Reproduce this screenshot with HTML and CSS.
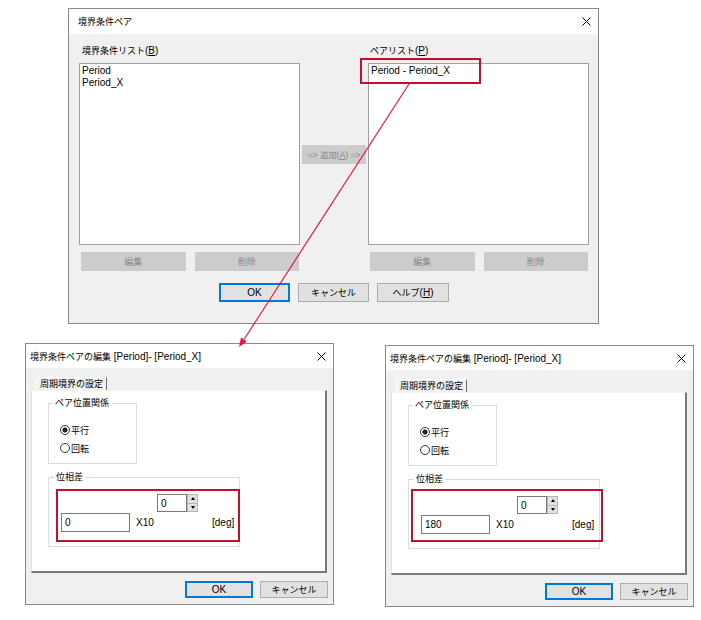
FILE: index.html
```html
<!DOCTYPE html>
<html>
  <head>
    <title>境界条件ペア</title>
    <meta charset="utf-8" />
    <link rel="stylesheet" href="styles.css">
  </head>
  <body>
    <div class="canvas">
      <div class="win win-main">
        <div class="titlebar">
          <span class="ja">境界条件ペア</span>
          <svg class="close" width="9" height="9" viewBox="0 0 9 9"><path d="M0.5 0.5L8.5 8.5M8.5 0.5L0.5 8.5" /></svg>
        </div>
        <div class="main-body">
          <div class="pairs">
            <div class="lbl"><span class="ja">境界条件リスト</span>(<u>B</u>)</div>
            <div class="lbl lbl-right"><span class="ja">ペアリスト</span>(<u>P</u>)</div>
            <div class="listbox">
              <div>Period</div>
              <div>Period_X</div>
            </div>
            <button class="btn off add"><span>=&gt; <span class="ja">追加</span>(<u>A</u>) =&gt;</span></button>
            <div class="listbox">
              <div>Period - Period_X</div>
              <div class="mark mark-list"></div>
            </div>
            <div class="btnrow">
              <button class="btn off"><span class="ja">編集</span></button>
              <button class="btn off"><span class="ja">削除</span></button>
            </div>
            <div class="btnrow btnrow-right">
              <button class="btn off"><span class="ja">編集</span></button>
              <button class="btn off"><span class="ja">削除</span></button>
            </div>
          </div>
          <div class="actions">
            <button class="btn def">OK</button>
            <button class="btn"><span class="ja">キャンセル</span></button>
            <button class="btn help"><span><span class="ja">ヘルプ</span>(<u>H</u>)</span></button>
          </div>
        </div>
      </div>

      <div class="win win-edit win-a">
        <div class="titlebar">
          <span><span class="ja">境界条件ペアの編集</span> [Period]- [Period_X]</span>
          <svg class="close" width="9" height="9" viewBox="0 0 9 9"><path d="M0.5 0.5L8.5 8.5M8.5 0.5L0.5 8.5" /></svg>
        </div>
        <div class="edit-body">
          <div class="tabs"><div class="tab ja">周期境界の設定</div></div>
          <div class="panel">
            <div class="grp grp-pair">
              <div class="grp-title ja">ペア位置関係</div>
              <div class="radios">
                <div class="radio on ja">平行</div>
                <div class="radio ja">回転</div>
              </div>
            </div>
            <div class="grp grp-phase">
              <div class="grp-title ja">位相差</div>
              <div class="spin">
                <div class="field">0</div>
                <div class="arrows"><span class="up"></span><span class="down"></span></div>
              </div>
              <div class="val-row">
                <div class="field wide">0</div>
                <span class="x10">X10</span>
                <span>[deg]</span>
              </div>
              <div class="mark mark-a"></div>
            </div>
          </div>
          <div class="actions edit-actions">
            <button class="btn def">OK</button>
            <button class="btn"><span class="ja">キャンセル</span></button>
          </div>
        </div>
      </div>

      <div class="win win-edit win-b">
        <div class="titlebar">
          <span><span class="ja">境界条件ペアの編集</span> [Period]- [Period_X]</span>
          <svg class="close" width="9" height="9" viewBox="0 0 9 9"><path d="M0.5 0.5L8.5 8.5M8.5 0.5L0.5 8.5" /></svg>
        </div>
        <div class="edit-body">
          <div class="tabs"><div class="tab ja">周期境界の設定</div></div>
          <div class="panel">
            <div class="grp grp-pair">
              <div class="grp-title ja">ペア位置関係</div>
              <div class="radios">
                <div class="radio on ja">平行</div>
                <div class="radio ja">回転</div>
              </div>
            </div>
            <div class="grp grp-phase">
              <div class="grp-title ja">位相差</div>
              <div class="spin">
                <div class="field">0</div>
                <div class="arrows"><span class="up"></span><span class="down"></span></div>
              </div>
              <div class="val-row">
                <div class="field wide">180</div>
                <span class="x10">X10</span>
                <span>[deg]</span>
              </div>
              <div class="mark mark-b"></div>
            </div>
          </div>
          <div class="actions edit-actions">
            <button class="btn def">OK</button>
            <button class="btn"><span class="ja">キャンセル</span></button>
          </div>
        </div>
      </div>

      <svg class="arrow" width="701" height="620" viewBox="0 0 701 620">
        <line x1="409" y1="84" x2="244" y2="339.5" />
        <polygon points="239,347 246.8,341.4 241,337.6" />
      </svg>
    </div>
  </body>
</html>
```

FILE: styles.css
```css
body {
  margin: 0;
  background: #fff;
  color: #000;
  font-family: "Liberation Sans", "Noto Sans CJK JP", sans-serif;
  font-size: 10px;
}
.canvas {
  position: relative;
  width: 701px;
  height: 620px;
  overflow: hidden;
}
.ja {
  font-size: 9px;
}
u {
  text-decoration: underline;
}

/* windows */
.win {
  position: absolute;
  box-sizing: border-box;
  display: flex;
  flex-direction: column;
  border: 1px solid #8a8a8a;
  background: #f0f0f0;
}
.win-main {
  left: 68px;
  top: 8px;
  width: 531px;
  height: 316px;
}
.win-a {
  left: 25px;
  top: 343px;
  width: 309px;
  height: 262px;
}
.win-b {
  left: 385px;
  top: 345px;
  width: 309px;
  height: 262px;
}
.titlebar {
  flex: none;
  display: flex;
  align-items: center;
  justify-content: space-between;
  background: #fff;
  white-space: nowrap;
}
.win-main .titlebar {
  height: 25px;
  padding: 0 7px 0 9px;
}
.win-edit .titlebar {
  height: 24px;
  padding: 0 7px 0 4px;
}
.close path {
  stroke: #000;
  stroke-width: 1;
  fill: none;
}

/* buttons */
.btn {
  box-sizing: border-box;
  display: flex;
  align-items: center;
  justify-content: center;
  height: 19px;
  padding: 0;
  font: inherit;
  color: #000;
  background: #e1e1e1;
  border: 1px solid #adadad;
  white-space: nowrap;
}
.btn.off {
  background: #cccccc;
  border-color: #cccccc;
  color: #8a8a8a;
}
.btn.def {
  border: 2px solid #0078d7;
}

/* main dialog */
.main-body {
  padding: 10px 9px 0 10px;
}
.pairs {
  display: grid;
  grid-template-columns: 221px 64px 221px;
  column-gap: 2px;
}
.lbl {
  grid-column: 1;
  line-height: 14px;
  margin: 0 0 5px 3px;
}
.lbl-right {
  grid-column: 3;
  margin-left: 2px;
}
.listbox {
  position: relative;
  box-sizing: border-box;
  height: 182px;
  padding: 1px 2px 0;
  line-height: 12px;
  background: #fff;
  border: 1px solid #a0a0a0;
}
.add {
  align-self: center;
  width: 64px;
  font-size: 9px;
  letter-spacing: -0.2px;
}
.add .ja {
  font-size: 8.5px;
}
.btnrow {
  grid-column: 1;
  display: flex;
  gap: 9px;
  margin-top: 7px;
  padding: 0 1px 0 2px;
}
.btnrow-right {
  grid-column: 3;
}
.btnrow .btn {
  flex: 1;
}
.actions {
  display: flex;
  justify-content: center;
  gap: 8px;
  margin-top: 12px;
}
.actions .btn {
  width: 71px;
}
.actions .help {
  width: 72px;
}

/* edit dialogs */
.edit-body {
  flex: 1;
  display: flex;
  flex-direction: column;
  padding: 9px 6px 0 5px;
}
.tabs {
  display: flex;
  padding-left: 5px;
}
.tab {
  box-sizing: border-box;
  width: 71px;
  height: 13px;
  line-height: 12px;
  text-align: center;
  border-left: 1px solid #fff;
  border-top: 1px solid #fff;
  border-right: 1px solid #6e6e6e;
}
.panel {
  box-sizing: border-box;
  height: 183px;
  padding-left: 16px;
  background: #fff;
  border-top: 1px solid #f4f4f4;
  border-left: 1px solid #e2e2e2;
  border-right: 2px solid #7a7a7a;
  border-bottom: 2px solid #7a7a7a;
}
.grp {
  position: relative;
  box-sizing: border-box;
  border: 1px solid #dcdcdc;
}
.grp-title {
  width: max-content;
  margin: -7px 0 0 -7px;
  padding: 0 2px;
  line-height: 12px;
  background: #fff;
}
.grp-pair {
  width: 89px;
  height: 61px;
  margin-top: 12px;
  padding-left: 11px;
}
.radios {
  margin-top: 12px;
}
.radio {
  display: flex;
  align-items: center;
  height: 18px;
}
.radio::before {
  content: "";
  box-sizing: border-box;
  width: 10px;
  height: 10px;
  margin-right: 1px;
  border: 1px solid #333;
  border-radius: 50%;
  background: #fff;
}
.radio.on::before {
  background: radial-gradient(circle, #222 0 2.2px, #fff 2.9px);
}
.grp-phase {
  width: 192px;
  height: 70px;
  margin-top: 13px;
  padding-left: 12px;
}
.spin {
  display: flex;
  margin: 11px 0 0 96px;
  height: 18px;
}
.field {
  box-sizing: border-box;
  display: flex;
  align-items: center;
  padding-left: 3px;
  background: #fff;
  border: 1px solid #7a7a7a;
}
.spin .field {
  width: 30px;
}
.arrows {
  display: flex;
  flex-direction: column;
  width: 11px;
}
.arrows span {
  flex: 1;
  display: flex;
  align-items: center;
  justify-content: center;
  background: #e1e1e1;
  border: 1px solid #b5b5b5;
}
.arrows .up {
  border-bottom: none;
}
.arrows span::before {
  content: "";
  border-left: 2px solid transparent;
  border-right: 2px solid transparent;
}
.arrows .up::before {
  border-bottom: 3px solid #000;
}
.arrows .down::before {
  border-top: 3px solid #000;
}
.val-row {
  display: flex;
  align-items: center;
  height: 19px;
  margin-top: 1px;
}
.field.wide {
  width: 69px;
  height: 19px;
}
.x10 {
  width: 76px;
  margin-left: 6px;
}
.edit-actions {
  justify-content: flex-end;
  gap: 7px;
  margin: 8px -1px 0 0;
}
.edit-actions .btn {
  width: 68px;
  height: 17px;
}

/* red annotations */
.mark {
  position: absolute;
  box-sizing: border-box;
  border: 2px solid #c0102a;
}
.mark-list {
  left: -9px;
  top: -6px;
  width: 121px;
  height: 26px;
}
.mark-a {
  left: 7px;
  top: 11px;
  width: 184px;
  height: 53px;
}
.mark-b {
  left: 2px;
  top: 9px;
  width: 192px;
  height: 53px;
}
.arrow {
  position: absolute;
  left: 0;
  top: 0;
  pointer-events: none;
}
.arrow line {
  stroke: #f0143c;
  stroke-width: 1.2;
}
.arrow polygon {
  fill: #f0143c;
}
```
